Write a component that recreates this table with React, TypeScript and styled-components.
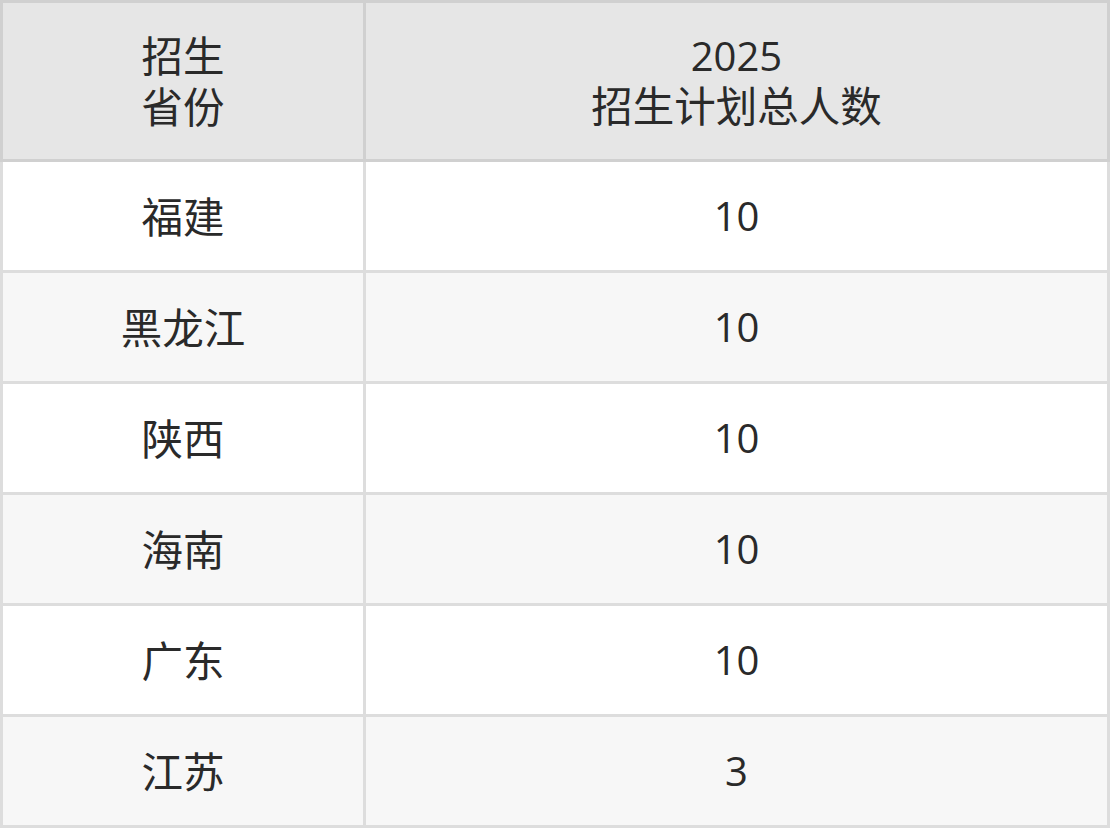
import React from 'react';
import styled, { createGlobalStyle } from 'styled-components';

const GlobalStyle = createGlobalStyle`
  html, body {
    margin: 0;
    padding: 0;
    background: #fff;
  }
  body {
    font-family: "Open Sans", "Noto Sans CJK SC", sans-serif;
  }
`;

const StyledTable = styled.table`
  width: 1110px;
  border-collapse: collapse;
  table-layout: fixed;
  font-size: 40px;
  line-height: 48px;
  color: #2a2a2a;
`;

const HeadCell = styled.th`
  height: 156px;
  padding: 0;
  border: 3px solid #d0d0d0;
  background: #e6e6e6;
  font-weight: 400;
  text-align: center;
  vertical-align: middle;
`;

const BodyRow = styled.tr<{ $striped: boolean }>`
  background: ${(props) => (props.$striped ? '#f7f7f7' : '#fff')};
`;

const Cell = styled.td`
  height: 108px;
  padding: 0;
  border: 3px solid #dddddd;
  text-align: center;
  vertical-align: middle;
`;

// Chinese glyphs run a touch larger than the digits in the source
const Han = styled.span`
  font-family: "Noto Sans CJK SC", sans-serif;
  font-size: 41.5px;
`;

const rows: [string, number][] = [
  ['福建', 10],
  ['黑龙江', 10],
  ['陕西', 10],
  ['海南', 10],
  ['广东', 10],
  ['江苏', 3],
];

const App = () => {
  return (
    <>
      <GlobalStyle />
      <StyledTable>
        <colgroup>
          <col style={{ width: 363 }} />
          <col />
        </colgroup>
        <thead>
          <tr>
            <HeadCell>
              <Han>招生</Han>
              <br />
              <Han>省份</Han>
            </HeadCell>
            <HeadCell>
              2025
              <br />
              <Han>招生计划总人数</Han>
            </HeadCell>
          </tr>
        </thead>
        <tbody>
          {rows.map(([province, total], i) => (
            <BodyRow key={province} $striped={i % 2 === 1}>
              <Cell>
                <Han>{province}</Han>
              </Cell>
              <Cell>{total}</Cell>
            </BodyRow>
          ))}
        </tbody>
      </StyledTable>
    </>
  );
};

export default App;
